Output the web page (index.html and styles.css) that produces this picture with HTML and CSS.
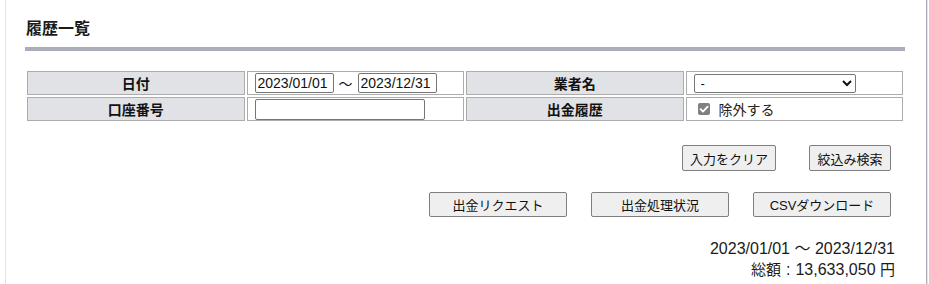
FILE: index.html
```html
<!DOCTYPE html>
<html lang="ja">
<head>
<meta charset="utf-8">
<title>履歴一覧</title>
<link rel="stylesheet" href="styles.css">
</head>
<body>
<div class="page">
  <h2 class="title">履歴一覧</h2>
  <table class="search">
    <tr>
      <th class="label">日付</th>
      <td class="value">
        <input class="field date" type="text" value="2023/01/01"><span class="tilde">～</span><input class="field date" type="text" value="2023/12/31">
      </td>
      <th class="label">業者名</th>
      <td class="value">
        <select class="field select"><option>-</option></select>
      </td>
    </tr>
    <tr>
      <th class="label">口座番号</th>
      <td class="value"><input class="field account" type="text" value=""></td>
      <th class="label">出金履歴</th>
      <td class="value">
        <label class="check">
          <span class="checkbox"><svg width="12" height="12" viewBox="0 0 12 12"><path d="M2.6 6.2 L5 8.6 L9.6 3.6" fill="none" stroke="#fff" stroke-width="1.8" stroke-linecap="round" stroke-linejoin="round"/></svg></span>
          <span class="check-text">除外する</span>
        </label>
      </td>
    </tr>
  </table>
  <div class="actions search-actions">
    <button class="btn btn-clear" type="button">入力をクリア</button>
    <button class="btn btn-search" type="button">絞込み検索</button>
  </div>
  <div class="actions main-actions">
    <button class="btn btn-wide" type="button">出金リクエスト</button>
    <button class="btn btn-wide" type="button">出金処理状況</button>
    <button class="btn btn-wide" type="button">CSVダウンロード</button>
  </div>
  <div class="summary">
    <div class="summary-line">2023/01/01 ～ 2023/12/31</div>
    <div class="summary-line"><span class="cjk">総額</span><span class="colon">:</span>13,633,050 <span class="cjk">円</span></div>
  </div>
</div>
</body>
</html>
```

FILE: styles.css
```css
html, body {
  margin: 0;
  padding: 0;
  background: #fff;
}
body {
  font-family: "Liberation Sans", "Noto Sans CJK JP", sans-serif;
  color: #1a1a1a;
}
.page {
  margin-left: 5px;
  width: 880px;
  min-height: 284px;
  padding: 0 21px 0 19px;
  border-left: 1px solid #e2e2ec;
  border-right: 1px solid #aeaab8;
  box-shadow: 1px 0 0 #e4e4ee;
}
.title {
  margin: 0;
  padding: 17px 0 6px 1px;
  font-size: 16px;
  line-height: 24px;
  font-weight: bold;
  color: #1a1a1a;
  border-bottom: 4px solid #abaeb9;
}
.search {
  width: 100%;
  margin-top: 18px;
  border-collapse: separate;
  border-spacing: 2px;
  table-layout: fixed;
}
.search th, .search td {
  height: 24px;
  box-sizing: border-box;
  border: 1px solid #acacac;
  padding: 0 7px;
  font-size: 13px;
  vertical-align: middle;
}
.search th.label {
  background: #e1e2e6;
  font-size: 14px;
  font-weight: bold;
  text-align: center;
  color: #111;
}
.value {
  text-align: left;
  white-space: nowrap;
}
.field {
  box-sizing: border-box;
  border: 1px solid #767676;
  border-radius: 2px;
  background: #fff;
  font-family: "Liberation Sans", "Noto Sans CJK JP", sans-serif;
  font-size: 14px;
  color: #111;
  vertical-align: middle;
  margin: 0;
}
.date {
  width: 79px;
  height: 20px;
  padding: 0 2px;
}
.tilde {
  display: inline-block;
  width: 24px;
  text-align: center;
  font-size: 14px;
  vertical-align: middle;
}
.account {
  width: 170px;
  height: 21px;
  padding: 0 2px;
  margin-top: 1px;
}
.select {
  width: 162px;
  height: 19px;
  padding: 0 2px;
  font-size: 13px;
}
.check {
  display: inline-flex;
  align-items: center;
  gap: 9px;
  padding-left: 4px;
  font-size: 14px;
  color: #222;
}
.checkbox {
  display: inline-block;
  width: 12px;
  height: 12px;
  border-radius: 2px;
  background: #808080;
  line-height: 0;
}
.actions {
  display: flex;
  justify-content: flex-end;
  padding-right: 14px;
}
.search-actions {
  margin-top: 22px;
  gap: 33px;
}
.main-actions {
  margin-top: 21px;
  gap: 24px;
}
.btn {
  box-sizing: border-box;
  margin: 0;
  padding: 0 6px;
  background: #efefef;
  border: 1px solid #7f7f7f;
  border-radius: 2px;
  font-family: "Liberation Sans", "Noto Sans CJK JP", sans-serif;
  font-size: 13px;
  color: #111;
}
.btn-clear {
  width: 94px;
  height: 26px;
}
.btn-search {
  width: 82px;
  height: 26px;
}
.btn-wide {
  width: 138px;
  height: 25px;
}
.summary {
  margin-top: 21px;
  padding-right: 10px;
  text-align: right;
  font-size: 16px;
  line-height: 21px;
  color: #1a1a1a;
}
.cjk {
  font-size: 15px;
}
.colon {
  margin: 0 5px;
}
```
